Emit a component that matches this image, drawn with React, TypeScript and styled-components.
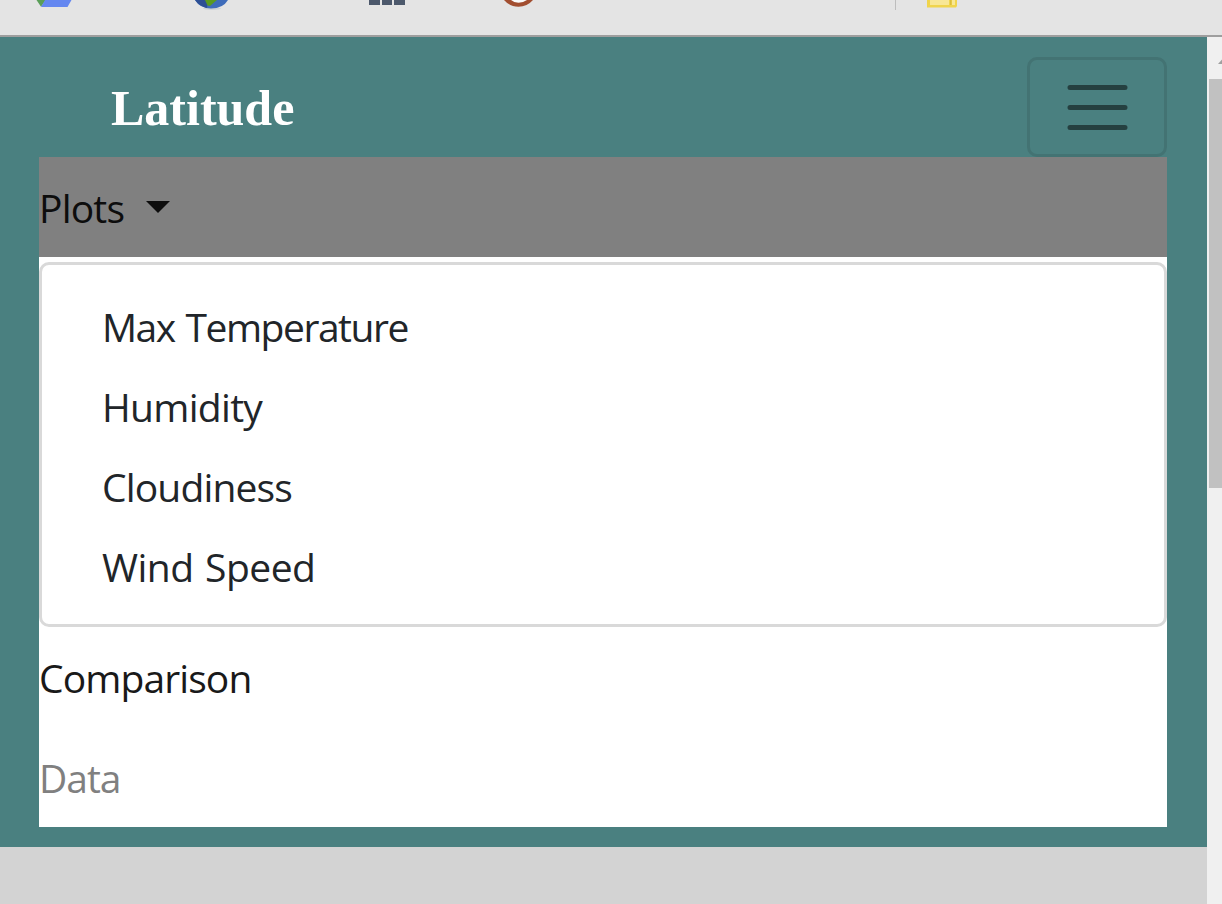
import React from 'react';
import styled, { createGlobalStyle } from 'styled-components';

const GlobalStyle = createGlobalStyle`
  * { box-sizing: border-box; }
  body { margin: 0; overflow: hidden; font-family: "Open Sans", "Noto Sans", sans-serif; }
`;

const Window = styled.div`
  display: flex;
  flex-direction: column;
  width: 1222px;
  height: 904px;
  overflow: hidden;
`;

const BookmarkBar = styled.header`
  flex: 0 0 37px;
  background: #e4e4e4;
  border-bottom: 2px solid #9e9e9e;
  svg { display: block; }
`;

const Viewport = styled.div`
  flex: 1;
  display: flex;
`;

const Page = styled.main`
  width: 1207px;
  background: #d3d3d3;
`;

const Navbar = styled.nav`
  height: 810px;
  padding: 20px 40px 20px 39px;
  background: #4a8080;
`;

const NavHeader = styled.div`
  display: flex;
  align-items: center;
  justify-content: space-between;
  height: 100px;
  padding-left: 72px;
`;

const Brand = styled.a`
  padding-top: 2px;
  font: bold 50px/60px "Liberation Serif", serif;
  color: #fff;
`;

const Toggler = styled.button`
  display: flex;
  align-items: center;
  justify-content: center;
  width: 140px;
  height: 100px;
  padding: 0;
  background: transparent;
  border: 3px solid #437373;
  border-radius: 10px;
`;

const Collapse = styled.div`
  background: #fff;
`;

const NavItem = styled.div<{ $active?: boolean; $muted?: boolean; $spacing: number }>`
  display: flex;
  align-items: center;
  height: 100px;
  padding-top: 2px;
  font-size: 39px;
  line-height: 60px;
  white-space: nowrap;
  letter-spacing: ${p => p.$spacing}px;
  color: ${p => (p.$muted ? '#808080' : p.$active ? '#0d0d0d' : '#191919')};
  background: ${p => (p.$active ? '#808080' : 'transparent')};
`;

const Caret = styled.span`
  margin: -3px 0 0 22px;
  border-top: 12px solid #0d0d0d;
  border-left: 12px solid transparent;
  border-right: 12px solid transparent;
`;

const Menu = styled.div`
  height: 365px;
  margin-top: 5px;
  padding: 22px 60px 0;
  background: #fff;
  border: 3px solid #d9d9d9;
  border-radius: 10px;
`;

const MenuItem = styled.div<{ $spacing: number }>`
  display: flex;
  align-items: center;
  height: 80px;
  font-size: 39px;
  line-height: 60px;
  white-space: pre;
  letter-spacing: ${p => p.$spacing}px;
  word-spacing: 2px;
  color: #212529;
`;

const ScrollTrack = styled.div`
  width: 15px;
  padding-left: 2px;
  background: #f0f0f0;
  overflow: hidden;
`;

const ScrollArrow = styled.svg`
  display: block;
  width: 13px;
  height: 42px;
`;

const ScrollThumb = styled.div`
  height: 409px;
  background: #c1c1c1;
`;

const plots = [
  { name: 'Max Temperature', spacing: -1.46 },
  { name: 'Humidity', spacing: -0.7 },
  { name: 'Cloudiness', spacing: -0.85 },
  { name: 'Wind Speed', spacing: -0.53 },
];

export default function App() {
  return (
    <Window>
      <GlobalStyle />
      <BookmarkBar>
        <svg width="1222" height="35" viewBox="0 0 1222 35">
          <path d="M36.5 0H46L41 6.8Z" fill="#5a9e58" />
          <path d="M45 0H71.5L67.5 7H41Z" fill="#6487f0" />
          <ellipse cx="212" cy="8.5" rx="9" ry="1.4" fill="#cdd2d4" />
          <path d="M195 0Q200 8.5 211 8.5Q223 8.5 228 0Z" fill="#3e6cba" />
          <path d="M195 0Q199 6 207 8L208 0Z" fill="#2d4f94" />
          <path d="M205 0H217L214 2.5L210 6L207.5 5.5Z" fill="#5a9a20" />
          <path d="M369 0H380V5H369ZM382 0H392V5H382ZM394 0H405V5H394Z" fill="#4c586b" />
          <path d="M504 0Q510 6.8 518.5 6.8Q527 6.8 533 0Z" fill="#a24e30" />
          <path d="M511 0Q514 2.8 518.5 2.8Q523 2.8 527 0Z" fill="#fafafa" />
          <path d="M895 0H896V10H895Z" fill="#bdbdbd" />
          <path d="M927 0H957V6L956 7.5H927Z" fill="#f0d44c" />
          <path d="M930 0H949V5H930Z" fill="#f8e795" />
          <path d="M952 0H955V5H952Z" fill="#f8e795" />
          <path d="M950 0H951.5V5H950Z" fill="#dbbd3c" />
        </svg>
      </BookmarkBar>
      <Viewport>
        <Page>
          <Navbar>
            <NavHeader>
              <Brand>Latitude</Brand>
              <Toggler aria-label="Toggle navigation">
                <svg width="64" height="50" viewBox="0 0 64 50">
                  <path
                    d="M5 5.5H60M5 25.5H60M5 45.5H60"
                    stroke="#254040"
                    strokeWidth="5"
                    strokeLinecap="round"
                  />
                </svg>
              </Toggler>
            </NavHeader>
            <Collapse>
              <NavItem $active $spacing={-0.8}>
                Plots
                <Caret />
              </NavItem>
              <Menu>
                {plots.map(plot => (
                  <MenuItem key={plot.name} $spacing={plot.spacing}>{plot.name}</MenuItem>
                ))}
              </Menu>
              <NavItem $spacing={-0.9}>Comparison</NavItem>
              <NavItem $muted $spacing={-1}>Data</NavItem>
            </Collapse>
          </Navbar>
        </Page>
        <ScrollTrack>
          <ScrollArrow viewBox="0 0 13 42">
            <path d="M9 27L13 22.5V27Z" fill="#a0a0a0" />
          </ScrollArrow>
          <ScrollThumb />
        </ScrollTrack>
      </Viewport>
    </Window>
  );
}
